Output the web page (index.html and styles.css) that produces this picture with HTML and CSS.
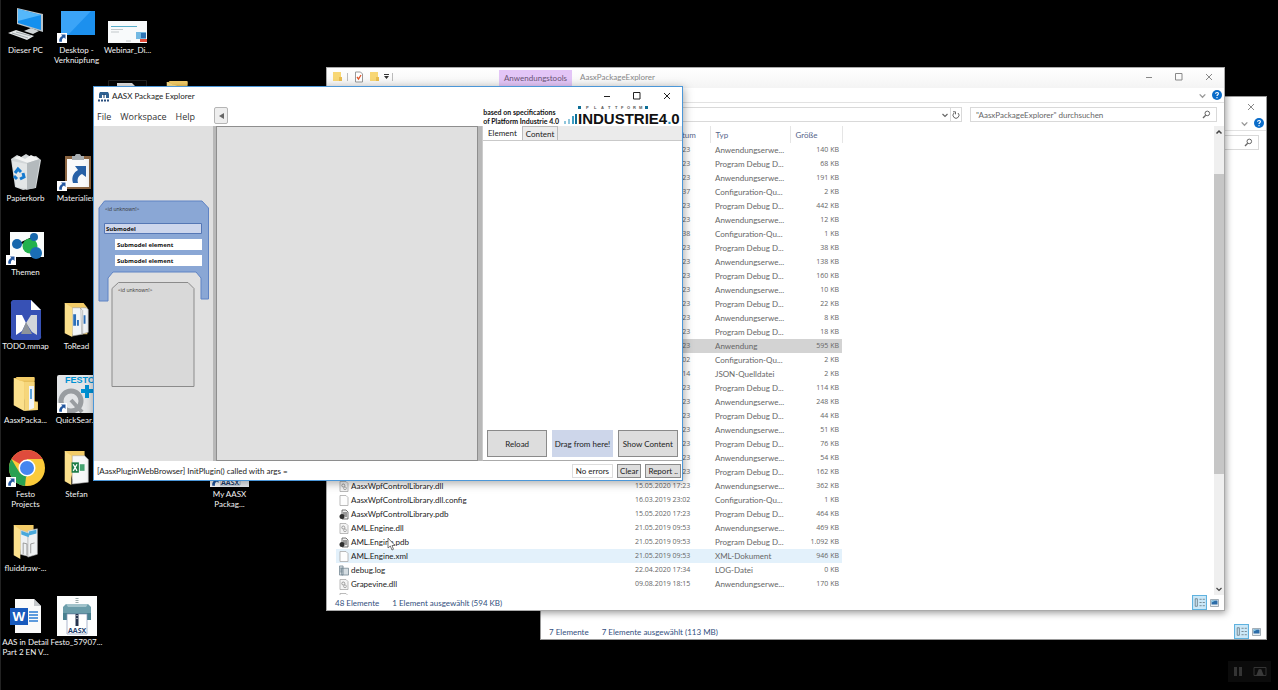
FILE: index.html
```html
<!DOCTYPE html>
<html lang="de">
<head>
<meta charset="utf-8">
<title>Desktop</title>
<link rel="stylesheet" href="styles.css">
</head>
<body>
<svg class="defs" aria-hidden="true">
  <symbol id="i-shortcut" viewBox="0 0 10 10"><path fill="#fff" d="M0 0h10v10H0z"/><path fill="#24579f" d="M4 1.500h4.500V6L7 4.600C5 5.500 4.700 7 5 8.700H2.300C1.700 6 3.200 3.800 5.400 3z"/></symbol>
  <symbol id="i-folder" viewBox="0 0 26 36"><path fill="#e2b84f" d="M0 1h22v25h3.500v9H17z"/><path fill="#fbe08c" d="M0 1l11 4v31L0 30z"/><path fill="#f3cc68" d="M2 0h20v4H6z"/><path fill="#f6d67b" d="M11 5h11v21l3.500 1v8L11 36z"/></symbol>
  <symbol id="i-search" viewBox="0 0 9 9"><circle cx="5.300" cy="3.400" r="2.300" fill="none" stroke="currentColor"/><path stroke="currentColor" stroke-width="1.300" d="M3.700 5.200L1 8"/></symbol>
  <symbol id="i-close" viewBox="0 0 8 8"><path stroke="currentColor" fill="none" d="M1 1l6 6M7 1L1 7"/></symbol>
  <symbol id="i-max" viewBox="0 0 8 8"><path stroke="currentColor" fill="none" d="M.5.500h6.500v6.500H.5z"/></symbol>
  <symbol id="i-min" viewBox="0 0 8 8"><path stroke="currentColor" fill="none" d="M1 4.500h6"/></symbol>
  <symbol id="i-down" viewBox="0 0 8 8"><path stroke="currentColor" fill="none" stroke-width="1.200" d="M1.500 3L4 5.500 6.500 3"/></symbol>
  <symbol id="i-up" viewBox="0 0 8 8"><path stroke="currentColor" fill="none" stroke-width="1.500" d="M1.500 5.500L4 3l2.500 2.500"/></symbol>
  <symbol id="i-details" viewBox="0 0 14 14"><path fill="#cbe8f8" stroke="#5fb2df" d="M.5.500h13v13H.5z"/><path stroke="#6d7d86" fill="none" stroke-width=".8" d="M3 3.500h2v7H3zM7 4h2M10 4h2M7 7h2M10 7h2M7 10h2M10 10h2"/></symbol>
  <symbol id="i-thumb" viewBox="0 0 9 8"><path fill="#e9eef2" stroke="#8e9aa4" stroke-width=".8" d="M.5.500h8v7h-8z"/><path fill="#2b6ca8" d="M1.500 1.500h6v4h-6z"/><path fill="#8fd0e9" d="M1.500 1.500h4l-4 2z"/></symbol>
  <symbol id="f-dll" viewBox="0 0 10 11"><path fill="#f4f4f4" stroke="#aaa" stroke-width=".8" d="M1 .5h6L9 2.500v8H1z"/><circle cx="4.300" cy="4.500" r="1.500" fill="none" stroke="#999"/><circle cx="6" cy="7.300" r="1.400" fill="none" stroke="#aaa"/></symbol>
  <symbol id="f-doc" viewBox="0 0 10 11"><path fill="#fdfdfd" stroke="#aaa" stroke-width=".8" d="M1 .5h6L9 2.500v8H1z"/></symbol>
  <symbol id="f-pdb" viewBox="0 0 10 11"><path fill="#eee" stroke="#555" stroke-width=".8" d="M3 1h4l2 2v7H3z"/><path stroke="#444" fill="none" d="M5 3v4M7 3v5"/><circle cx="3" cy="7.500" r="2.500" fill="#2f2f2f"/></symbol>
  <symbol id="f-log" viewBox="0 0 11 11"><path fill="#d5dde2" stroke="#6c7f8b" stroke-width=".8" d="M3 3h7.500v7.500H3zM.5.500h4v10h-4z"/><path stroke="#6c7f8b" stroke-width=".8" d="M1 3h3M1 5h3M1 7h3"/></symbol>
  <symbol id="i-help" viewBox="0 0 10 10"><circle cx="5" cy="5" r="5" fill="#0a6cc9"/><path fill="none" stroke="#fff" stroke-width="1.100" d="M3.500 3.800C3.600 2 6.500 2 6.400 3.800 6.300 4.700 5 4.800 5 6M5 7v1.200"/></symbol>
</svg>

<main class="desktop">
  <section class="icons" aria-label="Desktop">
    <a class="shortcut c1 r1" href="#"><span class="pic"><svg width="36" height="34" viewBox="0 0 36 34"><path fill="#b9c3c9" d="M9 1l26 6v18L9 17z"/><path fill="#1590ee" d="M10 2l23 6v15L10 16z"/><path fill="#55b8fb" d="M10 2l23 6L10 14z"/><path fill="#cfd4d6" d="M16 24l7-3 8 3-6 3z"/><path fill="#e4e7e8" d="M0 26l8-3 18 6-7 4z"/><path stroke="#a1a8ab" d="M4 26l16 5M8 25l15 4"/></svg></span><span>Dieser PC</span></a>
    <a class="shortcut c2 r1" href="#"><span class="pic"><svg width="38" height="34" viewBox="0 0 38 34"><path fill="#1c90ee" d="M3 4h34v24H3z"/><path fill="#3ba4f7" d="M3 4h30L10 28H3z"/></svg><svg class="badge"><use href="#i-shortcut"/></svg></span><span>Desktop - Verknüpfung</span></a>
    <a class="shortcut c3 r1" href="#"><span class="pic low"><svg width="39" height="22" viewBox="0 0 39 22"><path fill="#f8fafb" d="M0 0h39v22H0z"/><path stroke="#58aeca" d="M3 5.500h26"/><path stroke="#c2c8cb" d="M3 8.500h12M3 11h8M18 20h5"/><path fill="#73b9e3" d="M28 11h10v7H28z"/><path fill="#2e73b4" d="M33 12h5v5h-5z"/><path fill="#e24c3a" d="M32 18h7v3h-7z"/></svg></span><span>Webinar_Di...</span></a>
    <a class="shortcut c3 r2" href="#" aria-label="Dokument"><span class="pic"><svg width="39" height="36" viewBox="0 0 39 36"><path fill="#050505" stroke="#222" d="M.5.500h38V36H.5z"/><path fill="#e4e4e4" d="M9 3h15l4 4v26H9z"/></svg></span></a>
    <a class="shortcut c4 r2" href="#" aria-label="Ordner"><span class="pic"><svg width="26" height="34"><use href="#i-folder"/></svg></span></a>
    <a class="shortcut c1 r3" href="#"><span class="pic"><svg width="32" height="36" viewBox="0 0 32 36"><path fill="#d2d6d8" d="M1 5l6-4 4 2 5-3 5 3 5-1 5 4-5 28-13 2-8-3z"/><path fill="#f3f4f4" d="M4 4l5-2 6 3 6-4 8 4-11 4z"/><path fill="#b4babd" d="M17 9l13-4-5 29-9 2z"/><path fill="#e3e6e7" d="M2 7l15 3v25L6 33z"/><g fill="none" stroke="#167bd0" stroke-width="3"><path d="M5 19l3-4 3 3M13 19l1 4-4 2M7 25l-3-3"/></g></svg></span><span>Papierkorb</span></a>
    <a class="shortcut c2 r3" href="#"><span class="pic"><svg width="38" height="36" viewBox="0 0 38 36"><path fill="#8c6541" d="M7 2h26v33H7z"/><path fill="#fafafa" d="M9 5h22v28H9z"/><path fill="#a9afb3" d="M14 2h3c0-3 6-3 6 0h3v4H14z"/><path fill="#2861a6" d="M17 12h11v11l-4-3c-4 2-5 5-4 9h-5c-2-6 1-11 5-13z"/></svg><svg class="badge"><use href="#i-shortcut"/></svg></span><span>Materialien</span></a>
    <a class="shortcut c1 r4" href="#"><span class="pic"><svg width="38" height="34" viewBox="0 0 38 34"><path fill="#fafcfb" d="M3 3h34v25H3z"/><path stroke="#999" d="M10 15h13l4-8M23 17l6 8"/><circle cx="10" cy="15" r="5" fill="#1667ac"/><circle cx="23" cy="17" r="7.500" fill="#22b14c"/><circle cx="27" cy="8" r="4" fill="#1667ac"/><circle cx="29" cy="24" r="6" fill="#1a6eb5"/></svg><svg class="badge"><use href="#i-shortcut"/></svg></span><span>Themen</span></a>
    <a class="shortcut c1 r5" href="#"><span class="pic"><svg width="32" height="40" viewBox="0 0 32 40"><path fill="#3751b5" d="M4 0h17l10 10v26a3 3 0 0 1-3 4H4a3 3 0 0 1-3-4V4a3 3 0 0 1 3-4z"/><path fill="#fff" d="M21 0l10 10H21zM6 15h6l4 8-4 8-6 4z"/><path fill="#d3d6da" d="M27 15h-6l-5 8 6 9 5 3z"/><path fill="#8e949b" d="M16 22l-5 12h11z"/></svg></span><span>TODO.mmap</span></a>
    <a class="shortcut c2 r5" href="#"><span class="pic"><svg width="26" height="34" viewBox="0 0 26 36"><path fill="#f3cc68" d="M0 0h20l4 5v28H8z"/><path fill="#f2f5f8" stroke="#999" stroke-width=".6" d="M8 5h8l3 3v25l-11 2zM17 5h6l2 2v24l-7 2z"/><path fill="#2c6fb9" d="M9 12h3v12H9zM13 18h2v6h-2zM20 13h2v9h-2z"/><path fill="#fbe08c" d="M0 0l8 5v31l-8-4z"/></svg></span><span>ToRead</span></a>
    <a class="shortcut c1 r6" href="#"><span class="pic"><svg width="26" height="34"><use href="#i-folder"/><path fill="#f1f5f9" d="M16 9h5v22l-5 2z"/><path fill="#5aa3dc" d="M17 12h2v10h-2z"/></svg></span><span>AasxPacka...</span></a>
    <a class="shortcut c2 r6" href="#"><span class="pic"><svg width="39" height="38" viewBox="0 0 39 38"><rect width="39" height="38" rx="2" fill="#e3e5e7"/><text x="8" y="8" class="festo">FESTO</text><circle cx="14" cy="26" r="10" fill="none" stroke="#999da1" stroke-width="5"/><path stroke="#999da1" stroke-width="4" d="M14 25l11 12"/><path stroke="#0091d3" stroke-width="4" d="M24 16h13M30 10v13"/></svg><svg class="badge"><use href="#i-shortcut"/></svg></span><span>QuickSear...</span></a>
    <a class="shortcut c1 r7" href="#"><span class="pic"><svg width="38" height="38" viewBox="0 0 38 38"><circle cx="20" cy="19" r="18" fill="#fbcb3a"/><path fill="#df4b3c" d="M20 19L4.400 10A18 18 0 0 1 35.600 10H20z"/><path fill="#28a152" d="M20 19l-2 18A18 18 0 0 1 4.400 10l8 13.500 7.600 4.500z"/><circle cx="20" cy="19" r="8.500" fill="#fff"/><circle cx="20" cy="19" r="7" fill="#4486f0"/></svg><svg class="badge"><use href="#i-shortcut"/></svg></span><span>Festo<br>Projects</span></a>
    <a class="shortcut c2 r7" href="#"><span class="pic"><svg width="26" height="34" viewBox="0 0 26 36"><path fill="#f3cc68" d="M0 0h21v30H8z"/><path fill="#f7f8f8" stroke="#aaa" stroke-width=".6" d="M8 5h13l4 4v24l-17 2z"/><path fill="#1c7c47" d="M7 12h8v11H7z"/><path fill="none" stroke="#fff" stroke-width="1.400" d="M9 14l4 7M13 14l-4 7"/><path fill="#46a370" d="M16 14h5v7h-5z"/><path fill="#fbe08c" d="M0 0l7 5v31l-7-4z"/></svg></span><span>Stefan</span></a>
    <a class="shortcut c5 r7" href="#"><span class="pic"><svg width="39" height="38" viewBox="0 0 39 38"><path fill="#e9eef3" d="M0 0h39v38H0z"/><path fill="#fff" stroke="#8599b0" stroke-width=".7" d="M10 16h20v20H10z"/><text x="11" y="36" class="aasx">AASX</text></svg><svg class="badge"><use href="#i-shortcut"/></svg></span><span>My AASX Packag...</span></a>
    <a class="shortcut c1 r8" href="#"><span class="pic"><svg width="26" height="34" viewBox="0 0 26 36"><path fill="#f3cc68" d="M0 0h21v30H8z"/><path fill="#eef1f3" stroke="#bbb" stroke-width=".6" d="M7 5l8 3v25l-8-2zM15 6l10-2v27l-10 3z"/><path fill="#49a9dc" d="M8 6l8 3v4l-8-3zM16 7l8-2v4l-8 2z"/><path fill="none" stroke="#777" stroke-width=".7" d="M10 31V19l4 1v12M18 30V20l4-1"/><path fill="#fbe08c" d="M0 0l7 5v31l-7-4z"/></svg></span><span>fluiddraw-...</span></a>
    <a class="shortcut c1 r9" href="#"><span class="pic"><svg width="34" height="36" viewBox="0 0 34 36"><path fill="#fafafa" d="M6 1h19l7 7v27H6z"/><path fill="#c5c8cb" d="M25 1l7 7h-7z"/><path stroke="#2b7cd3" stroke-width="1.300" d="M20 14h9M20 17h9M20 20h9M20 23h9"/><path fill="#185abd" d="M1 10h18v17H1z"/><text x="3.500" y="23" class="word">W</text></svg></span><span>AAS in Detail<br>Part 2 EN V...</span></a>
    <a class="shortcut c2 r9" href="#"><span class="pic"><svg width="40" height="40" viewBox="0 0 40 40"><path fill="#fcfdfd" d="M0 0h40v40H0z"/><path stroke="#9aa" stroke-dasharray="1 1" stroke-width="3" d="M20 2v7"/><path fill="#6b9daa" d="M9 8h22l3 3v13H6V11z"/><path fill="#48808f" d="M6 17h28v7H6z"/><path fill="#a1c3cb" d="M9 8h22l-2 3H11z"/><path fill="#fff" stroke="#8b99b9" stroke-width=".7" d="M10 18h20v20H10z"/><path stroke="#26344e" stroke-width="3" d="M20 18v12"/><path stroke="#fff" stroke-dasharray="1 2" d="M20 19v6"/><text x="11" y="37" class="aasx">AASX</text></svg></span><span>Festo_57907...</span></a>
  </section>

  <section class="window explorer back">
    <div class="titlebar"><span class="grow"></span><span class="wincontrols"><button aria-label="Schließen"><svg><use href="#i-close"/></svg></button></span></div>
    <div class="ribbon"><button aria-label="Menüband"><svg><use href="#i-down"/></svg></button><button aria-label="Hilfe"><svg class="help"><use href="#i-help"/></svg></button></div>
    <div class="address"><label class="search"><input aria-label="Durchsuchen"><svg><use href="#i-search"/></svg></label></div>
    <div class="filler"></div>
    <footer class="status"><span>7 Elemente</span><span>7 Elemente ausgewählt (113 MB)</span><span class="grow"></span><button aria-label="Details"><svg class="details"><use href="#i-details"/></svg></button><button aria-label="Miniaturansichten"><svg class="thumbs"><use href="#i-thumb"/></svg></button></footer>
  </section>

  <section class="window explorer front">
    <div class="titlebar gradient">
      <svg class="quick" viewBox="0 0 60 14" aria-hidden="true"><path fill="#f8d775" d="M0 2h8v9H0z"/><path fill="#e9bd50" d="M6 7h3v4H6z"/><path stroke="#bbb" d="M14.500 3v8M59.500 3v8"/><path fill="#fff" stroke="#999" d="M22.500 2h5l2 2v8h-7z"/><path stroke="#e2562b" fill="none" stroke-width="1.300" d="M24 7l1.500 2L28 5"/><path fill="#f8d775" d="M37 2h8v9h-8z"/><path fill="#e9bd50" d="M43 7h3v4h-3z"/><path fill="#333" d="M51 4h5v1h-5zM51 6h5l-2.500 3z"/></svg>
      <span class="tools">Anwendungstools</span><span class="title grow">AasxPackageExplorer</span>
      <span class="wincontrols"><button aria-label="Minimieren"><svg><use href="#i-min"/></svg></button><button aria-label="Maximieren"><svg><use href="#i-max"/></svg></button><button aria-label="Schließen"><svg><use href="#i-close"/></svg></button></span>
    </div>
    <div class="ribbon"><button aria-label="Menüband"><svg><use href="#i-down"/></svg></button><button aria-label="Hilfe"><svg class="help"><use href="#i-help"/></svg></button></div>
    <div class="address">
      <div class="path grow"><button aria-label="Verlauf"><svg><use href="#i-down"/></svg></button><button class="refresh" aria-label="Aktualisieren"><svg viewBox="0 0 8 8"><path fill="none" stroke="currentColor" d="M6 2a3 3 0 1 1-4 0M1 .8h2.500v2.500"/></svg></button></div>
      <label class="search"><input aria-label="Suche" placeholder="&quot;AasxPackageExplorer&quot; durchsuchen"><svg><use href="#i-search"/></svg></label>
    </div>
    <div class="body">
      <div class="listing">
        <table>
          <colgroup><col class="w-name"><col class="w-date"><col class="w-type"><col class="w-size"></colgroup>
          <thead><tr><th>Name</th><th>Änderungsdatum</th><th>Typ</th><th>Größe</th></tr></thead>
          <tbody>
            <tr><td></td><td>15.05.2020 17:23</td><td>Anwendungserwe...</td><td>140 KB</td></tr>
            <tr><td></td><td>15.05.2020 17:23</td><td>Program Debug D...</td><td>68 KB</td></tr>
            <tr><td></td><td>15.05.2020 17:23</td><td>Anwendungserwe...</td><td>191 KB</td></tr>
            <tr><td></td><td>15.05.2020 17:37</td><td>Configuration-Qu...</td><td>2 KB</td></tr>
            <tr><td></td><td>15.05.2020 17:23</td><td>Program Debug D...</td><td>442 KB</td></tr>
            <tr><td></td><td>15.05.2020 17:23</td><td>Anwendungserwe...</td><td>12 KB</td></tr>
            <tr><td></td><td>15.05.2020 17:38</td><td>Configuration-Qu...</td><td>1 KB</td></tr>
            <tr><td></td><td>15.05.2020 17:23</td><td>Program Debug D...</td><td>38 KB</td></tr>
            <tr><td></td><td>15.05.2020 17:23</td><td>Anwendungserwe...</td><td>138 KB</td></tr>
            <tr><td></td><td>15.05.2020 17:23</td><td>Program Debug D...</td><td>160 KB</td></tr>
            <tr><td></td><td>15.05.2020 17:23</td><td>Anwendungserwe...</td><td>10 KB</td></tr>
            <tr><td></td><td>15.05.2020 17:23</td><td>Program Debug D...</td><td>22 KB</td></tr>
            <tr><td></td><td>15.05.2020 17:23</td><td>Anwendungserwe...</td><td>8 KB</td></tr>
            <tr><td></td><td>15.05.2020 17:23</td><td>Program Debug D...</td><td>18 KB</td></tr>
            <tr class="selected"><td></td><td>15.05.2020 17:23</td><td>Anwendung</td><td>595 KB</td></tr>
            <tr><td></td><td>16.03.2019 23:02</td><td>Configuration-Qu...</td><td>2 KB</td></tr>
            <tr><td></td><td>15.05.2020 17:14</td><td>JSON-Quelldatei</td><td>2 KB</td></tr>
            <tr><td></td><td>15.05.2020 17:23</td><td>Program Debug D...</td><td>114 KB</td></tr>
            <tr><td></td><td>15.05.2020 17:23</td><td>Anwendungserwe...</td><td>248 KB</td></tr>
            <tr><td></td><td>15.05.2020 17:23</td><td>Program Debug D...</td><td>44 KB</td></tr>
            <tr><td></td><td>15.05.2020 17:23</td><td>Anwendungserwe...</td><td>51 KB</td></tr>
            <tr><td></td><td>15.05.2020 17:23</td><td>Program Debug D...</td><td>76 KB</td></tr>
            <tr><td></td><td>15.05.2020 17:23</td><td>Anwendungserwe...</td><td>54 KB</td></tr>
            <tr><td></td><td>15.05.2020 17:23</td><td>Program Debug D...</td><td>162 KB</td></tr>
            <tr><td><svg><use href="#f-dll"/></svg>AasxWpfControlLibrary.dll</td><td>15.05.2020 17:23</td><td>Anwendungserwe...</td><td>362 KB</td></tr>
            <tr><td><svg><use href="#f-doc"/></svg>AasxWpfControlLibrary.dll.config</td><td>16.03.2019 23:02</td><td>Configuration-Qu...</td><td>1 KB</td></tr>
            <tr><td><svg><use href="#f-pdb"/></svg>AasxWpfControlLibrary.pdb</td><td>15.05.2020 17:23</td><td>Program Debug D...</td><td>464 KB</td></tr>
            <tr><td><svg><use href="#f-dll"/></svg>AML.Engine.dll</td><td>21.05.2019 09:53</td><td>Anwendungserwe...</td><td>469 KB</td></tr>
            <tr><td><svg><use href="#f-pdb"/></svg>AML.Engine.pdb</td><td>21.05.2019 09:53</td><td>Program Debug D...</td><td>1.092 KB</td></tr>
            <tr class="hover"><td><svg><use href="#f-doc"/></svg>AML.Engine.xml</td><td>21.05.2019 09:53</td><td>XML-Dokument</td><td>946 KB</td></tr>
            <tr><td><svg><use href="#f-log"/></svg>debug.log</td><td>22.04.2020 17:34</td><td>LOG-Datei</td><td>0 KB</td></tr>
            <tr><td><svg><use href="#f-dll"/></svg>Grapevine.dll</td><td>09.08.2019 18:15</td><td>Anwendungserwe...</td><td>170 KB</td></tr>
            <tr><td><svg><use href="#f-doc"/></svg></td><td></td><td></td><td></td></tr>
          </tbody>
        </table>
      </div>
      <div class="scrollbar"><svg><use href="#i-up"/></svg><span class="track"><span class="knob"></span></span><svg><use href="#i-down"/></svg></div>
    </div>
    <footer class="status"><span>48 Elemente</span><span>1 Element ausgewählt (594 KB)</span><span class="grow"></span><button aria-label="Details"><svg class="details"><use href="#i-details"/></svg></button><button aria-label="Miniaturansichten"><svg class="thumbs"><use href="#i-thumb"/></svg></button></footer>
  </section>

  <section class="window aasx-app">
    <div class="titlebar">
      <svg class="appicon" viewBox="0 0 12 11"><path fill="#2f6192" d="M2 1h8l1 2v4H1V3z"/><path fill="#fff" d="M4 4h4v5H4z"/><path fill="#193a63" d="M5.500 3h1v4h-1z"/><path stroke="#2a4f7e" stroke-width="2" stroke-dasharray="2 1" d="M0 9.500h12"/></svg>
      <span class="title grow">AASX Package Explorer</span>
      <span class="wincontrols"><button aria-label="Minimize"><svg><use href="#i-min"/></svg></button><button aria-label="Maximize"><svg><use href="#i-max"/></svg></button><button aria-label="Close"><svg><use href="#i-close"/></svg></button></span>
    </div>
    <div class="menubar">
      <nav><button>File</button><button>Workspace</button><button>Help</button></nav>
      <button class="collapse" aria-label="Collapse"><svg viewBox="0 0 5 6"><path fill="#666" d="M5 0v6L0 3z"/></svg></button>
      <span class="grow"></span>
      <p class="claim">based on specifications<br>of Platform Industrie 4.0</p>
      <svg class="logo" viewBox="0 0 118 20"><path fill="#8fc6dc" d="M0 15h2v3H0zM4 13h2v5H4z"/><path fill="#3e9ec4" d="M8 10h2v8H8z"/><path fill="#0d6e96" d="M11 8h2v10h-2z"/><path fill="#0d6e96" d="M14 0h3v3h-3zM81 0h3v3h-3z"/><text x="22" y="3" class="plattform">P</text><text x="30" y="3" class="plattform">L</text><text x="37" y="3" class="plattform">A</text><text x="44" y="3" class="plattform">T</text><text x="51" y="3" class="plattform">T</text><text x="57" y="3" class="plattform">F</text><text x="63" y="3" class="plattform">O</text><text x="69" y="3" class="plattform">R</text><text x="75" y="3" class="plattform">M</text><text x="14" y="18" class="industrie">INDUSTRIE4<tspan class="dot">.</tspan>0</text></svg>
    </div>
    <div class="panes">
      <aside class="overview">
        <svg viewBox="0 0 112 188">
          <path fill="#8aa7d5" stroke="#5f83c4" d="M6.500 1H104l6.500 7v91H103V78l-5-6H15l-5 6v23H1V8z"/>
          <text x="7" y="11" class="idtext">&lt;id unknown!&gt;</text>
          <path fill="#cdd6ec" stroke="#5577b5" d="M6.500 23.500h97v10h-97z"/><text x="8" y="31" class="smtext">Submodel</text>
          <path fill="#fff" d="M17 39h87v11H17zM17 55h87v11H17z"/><text x="19" y="47" class="smtext">Submodel element</text><text x="19" y="63" class="smtext">Submodel element</text>
          <path fill="#d9d9d9" stroke="#8b8b8b" d="M20.500 82.500H90l6 6v98H14v-98z"/>
          <text x="20" y="92" class="idtext">&lt;id unknown!&gt;</text>
        </svg>
      </aside>
      <div class="splitter"></div>
      <div class="tree"></div>
      <div class="splitter wide"></div>
      <div class="detail">
        <div class="tabs" role="tablist"><button class="tab active" role="tab">Element</button><button class="tab" role="tab">Content</button></div>
        <div class="filler"></div>
        <div class="actions"><button>Reload</button><button class="drag">Drag from here!</button><button>Show Content</button></div>
      </div>
    </div>
    <footer class="log"><span class="grow">[AasxPluginWebBrowser] InitPlugin() called with args =</span><output>No errors</output><button>Clear</button><button>Report ..</button></footer>
  </section>

  <svg class="cursor" viewBox="0 0 9 14" aria-hidden="true"><path fill="#fff" stroke="#555" stroke-width=".8" d="M1 1v10l2.300-2 1.700 4 1.500-.7L5 8.500h3z"/></svg>
  <div class="overlay"><svg viewBox="0 0 43 21"><path fill="#343434" d="M6 6h3v9H6zM11 6h3v9h-3z"/><path fill="none" stroke="#343434" d="M26 6.500h12v8H26z"/><path fill="#3a3a3a" d="M30 10a2 2 0 1 1 4 0l2 5h-8z"/></svg></div>
</main>
</body>
</html>
```

FILE: styles.css
```css
* { box-sizing: border-box; }
body { margin: 0; background: #000; font: 8px/10px Lato, "Open Sans", sans-serif; }
button, input { margin: 0; padding: 0; border: 0; background: none; font: inherit; color: inherit; }
button { display: flex; align-items: center; justify-content: center; white-space: nowrap; }
svg { display: block; flex: none; }
.defs { position: absolute; width: 0; height: 0; }
.grow { flex: 1; }
.filler { flex: 1; }

.desktop { position: relative; height: 100vh; overflow: hidden; box-shadow: inset 1px 0 #222; }

/* desktop shortcuts */
.icons { display: grid; grid-template-columns: repeat(5, 51px); grid-auto-rows: 74px; }
.shortcut { display: flex; flex-direction: column; align-items: center; color: #f4f4f4; text-align: center; text-decoration: none; }
.pic { position: relative; display: flex; align-items: center; justify-content: center; width: 40px; height: 40px; margin: 4px 0 1px; flex: none; }
.low { padding-top: 16px; }
.badge { position: absolute; left: 0; bottom: 1px; width: 10px; height: 10px; }
.c1 { grid-column: 1; } .c2 { grid-column: 2; } .c3 { grid-column: 3; } .c4 { grid-column: 4; } .c5 { grid-column: 5; }
.r1 { grid-row: 1; } .r2 { grid-row: 2; } .r3 { grid-row: 3; } .r4 { grid-row: 4; } .r5 { grid-row: 5; }
.r6 { grid-row: 6; } .r7 { grid-row: 7; } .r8 { grid-row: 8; } .r9 { grid-row: 9; }
.festo { font: bold 9px "Liberation Sans", sans-serif; fill: #0091d3; }
.aasx { font: bold 7px "Open Sans", sans-serif; fill: #22406e; }
.word { font: bold 13px "Open Sans", sans-serif; fill: #fff; }

/* windows */
.window { position: absolute; display: flex; flex-direction: column; background: #fff; }
.titlebar { display: flex; align-items: center; height: 20px; flex: none; }
.wincontrols { display: flex; }
.wincontrols button { width: 30px; height: 18px; }
.wincontrols svg { width: 8px; height: 8px; }
.explorer { color: #666; }
.explorer .wincontrols { color: #888; }
.back { left: 540px; top: 96px; right: 11px; bottom: 50px; border: 1px solid #999; }
.back .titlebar { height: 19px; }
.front { left: 326px; top: 67px; right: 53px; bottom: 79px; border: 1px solid #aaa; box-shadow: 1px 2px 7px rgba(0, 0, 0, .4); }
.gradient { padding-bottom: 2px; background: linear-gradient(#fff, #f4f4f4); }
.quick { width: 60px; height: 14px; margin: 0 106px 0 6px; }
.tools { display: flex; align-items: center; align-self: stretch; width: 73px; justify-content: center; margin-top: 2px; background: #e3c5f7; color: #6a5375; }
.explorer .title { padding-left: 8px; color: #888; }
.ribbon { display: flex; align-items: center; justify-content: flex-end; gap: 5px; height: 15px; padding-right: 2px; border-bottom: 1px solid #e2e2e2; color: #999; flex: none; }
.ribbon svg { width: 9px; height: 9px; }
.ribbon .help { width: 10px; height: 10px; }
.address { display: flex; justify-content: flex-end; gap: 8px; padding: 4px 7px 4px 8px; flex: none; }
.path { display: flex; justify-content: flex-end; height: 15px; border: 1px solid #d9d9d9; }
.path button { width: 11px; }
.path svg { width: 8px; height: 8px; }
.refresh { border-left: 1px solid #d9d9d9; }
.search { display: flex; align-items: center; width: 247px; height: 15px; padding: 0 5px; border: 1px solid #d9d9d9; }
.search input { flex: 1; min-width: 0; }
.search input::placeholder { color: #666; opacity: 1; }
.search svg { width: 9px; height: 9px; }
.body { display: flex; flex: 1; min-height: 0; }
.listing { flex: 1; min-width: 0; overflow: hidden; padding-left: 9px; }
table { border-collapse: collapse; table-layout: fixed; width: 506px; }
.w-name { width: 294px; } .w-date { width: 80px; } .w-type { width: 80px; } .w-size { width: 52px; }
th { height: 17px; padding: 0 5px; border-right: 1px solid #e5e5e5; color: #55658a; font-weight: normal; text-align: left; }
td { height: 14px; padding: 0 5px; white-space: nowrap; }
td:first-child { display: flex; align-items: center; gap: 2px; padding-left: 3px; color: #222; }
td:first-child svg { width: 10px; height: 11px; }
td:nth-child(2), td:last-child { font: 7px/10px "Open Sans", sans-serif; }
td:last-child { padding: 0 3px; text-align: right; }
.selected { background: #d3d3d3; }
.hover { background: #e3f1fb; }
.scrollbar { display: flex; flex-direction: column; align-items: center; width: 10px; background: #efefef; color: #444; }
.scrollbar svg { width: 8px; height: 12px; }
.track { flex: 1; width: 10px; padding: 36px 0 109px; display: flex; }
.knob { flex: 1; background: #c6c6c6; }
.status { display: flex; align-items: center; gap: 13px; height: 15px; padding: 0 5px 0 8px; color: #33507e; flex: none; }
.status .grow { margin-right: -26px; }
.status button + button { margin-left: -10px; }
.details { width: 15px; height: 15px; }
.thumbs { width: 9px; height: 8px; }

/* package explorer */
.aasx-app { left: 93px; top: 86px; right: 595px; bottom: 209px; border: 1px solid #4c97d8; color: #222; box-shadow: 1px 2px 9px rgba(0, 0, 0, .35); }
.aasx-app .titlebar { height: 18px; padding-left: 4px; }
.appicon { width: 12px; height: 11px; margin-right: 2px; }
.menubar { display: flex; align-items: center; height: 21px; padding: 0 0 0 3px; flex: none; }
nav { display: flex; gap: 9px; padding-top: 2px; font: 9px/12px "Open Sans", sans-serif; color: #333; }
.collapse { width: 14px; height: 17px; margin-left: 19px; border: 1px solid #b5b5b5; border-radius: 2px; background: #eee; }
.collapse svg { width: 5px; height: 6px; }
.claim { margin: 0 5px 0 0; padding-top: 2px; font-weight: bold; font-size: 7px; line-height: 9px; color: #111; }
.logo { width: 118px; height: 20px; }
.plattform { font: bold 4px "Liberation Sans", sans-serif; fill: #555; }
.industrie { font: bold 15px "Liberation Sans", sans-serif; fill: #111; }
.dot { fill: #0d8dc0; }
.panes { display: flex; flex: 1; min-height: 0; background: #e0e0e0; }
.overview { width: 119px; padding: 74px 3px 0 4px; }
.overview svg { width: 112px; height: 188px; }
.idtext { font: 5px "Open Sans", sans-serif; fill: #333; }
.smtext { font: bold 6px "Open Sans", sans-serif; fill: #111; }
.splitter { width: 3px; background: #b8b8b8; }
.splitter.wide { width: 4px; }
.tree { flex: 1; border: 1px solid #8e8e8e; }
.detail { display: flex; flex-direction: column; width: 200px; border-left: 1px solid #ccc; border-bottom: 1px solid #aaa; background: #fff; }
.tabs { display: flex; align-items: flex-end; height: 15px; background: #ebebeb; border-bottom: 1px solid #c9c9c9; }
.tab { height: 14px; padding: 0 3px; border: 1px solid #bdbdbd; border-bottom: 0; background: #ececec; }
.tab.active { height: 15px; padding: 0 4px; border-color: #fff; background: #fff; }
.actions { display: grid; grid-template-columns: repeat(3, 1fr); gap: 5px; padding: 4px 4px 3px; }
.actions button { height: 27px; border: 1px solid #8a8a8a; background: #ddd; }
.actions .drag { border-color: #cdd6ea; background: #cdd6ea; }
.log { display: flex; align-items: center; gap: 4px; height: 19px; padding: 1px 1px 0 3px; flex: none; }
.log output { height: 14px; padding: 1px 3px; border: 1px solid #ddd; }
.log button { height: 14px; padding: 0 2px; border: 1px solid #8a8a8a; background: #ddd; }

.cursor { position: absolute; left: 387px; top: 537px; width: 9px; height: 14px; }
.overlay { position: absolute; right: 7px; bottom: 8px; width: 43px; height: 21px; background: #0b0b0b; }
```
